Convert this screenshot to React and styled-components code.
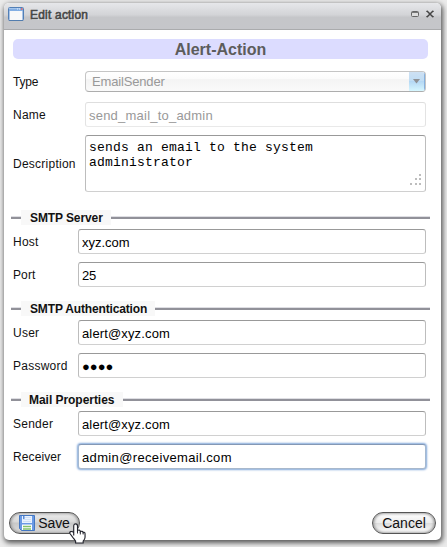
import React from 'react';
import styled, { createGlobalStyle, css } from 'styled-components';

const GlobalStyle = createGlobalStyle`
  * { box-sizing: border-box; }
  body { margin: 0; background: #e9e9e9; font-family: "Liberation Sans", Arial, sans-serif; }
`;

const Desktop = styled.main`
  width: 447px;
  height: 547px;
  padding: 3px 5px 7px 4px;
  overflow: hidden;
  background: #ebebeb;
`;

const Window = styled.section`
  position: relative;
  display: flex;
  flex-direction: column;
  width: 437px;
  height: 537px;
  border-radius: 5px;
  background: #fff;
  box-shadow: 1px 2px 5px 1px rgba(0, 0, 0, 0.62);
`;

const TitleBar = styled.header`
  display: flex;
  align-items: flex-start;
  height: 27px;
  padding: 4px 7px 0 4px;
  border-bottom: 1px solid #aaabad;
  border-radius: 5px 5px 0 0;
  background: linear-gradient(#e6e7ea 0, #d3d4d7 45%, #c5c6c9 55%, #c5c6ca 100%);
`;

const WindowTitle = styled.h1`
  flex: 1;
  margin: 0 0 0 6px;
  font-size: 12px;
  font-weight: 400;
  line-height: 17px;
  letter-spacing: 0.2px;
  color: #484848;
  -webkit-text-stroke: 0.6px #484848;
  text-shadow: 1px 1px 0 #eee;
`;

const WindowControls = styled.div`
  display: flex;
  gap: 7px;
  padding-top: 3px;
`;

const Content = styled.div`
  display: flex;
  flex-direction: column;
  flex: 1;
  padding: 9px 11px 0 7px;
`;

const Banner = styled.h2`
  width: 415px;
  height: 20px;
  margin: 0 0 12px 2px;
  border-radius: 5px;
  background: #dcdcff;
  color: #5c5c5c;
  font-size: 16px;
  font-weight: 700;
  line-height: 21px;
  text-align: center;
`;

const Row = styled.div`
  display: grid;
  grid-template-columns: ${({ $wide }) => ($wide ? '72px 341px' : '65px 348px')};
  align-items: center;
  height: ${({ $height = 25 }) => $height}px;
  margin: 0 0 ${({ $gap = 8 }) => $gap}px 2px;
`;

const Label = styled.label`
  font-size: 12px;
  line-height: 14px;
  letter-spacing: ${({ $spacing = 0.25 }) => $spacing}px;
  color: #111;
`;

const fieldFrame = css`
  width: 100%;
  height: 100%;
  margin: 0;
  outline: 0;
  border: 1px solid #bdbdbd;
  border-top-color: #999;
  border-bottom-color: #d0d0d0;
  border-radius: 3px;
  background: #fff;
  color: #000;
`;

const Input = styled.input`
  ${fieldFrame}
  padding: 2px 3px 0;
  font: 13px "Liberation Sans", Arial, sans-serif;
  letter-spacing: ${({ $spacing = 0 }) => $spacing}px;

  &:disabled {
    border-color: #dedede #e3e3e3 #e9e9e9;
    color: #999;
    -webkit-text-fill-color: #999;
  }

  ${({ $focused }) => $focused && css`
    border-color: #8498b5 #a4b8d0 #a8b8cc;
    box-shadow: 0 0 2px 1px #83a9da;
  `}
`;

const TextAreaFrame = styled.div`
  ${fieldFrame}
  display: flex;
  align-items: flex-end;
  justify-content: space-between;
  padding: 4px 3px 5px 3px;
`;

const TextArea = styled.textarea`
  align-self: stretch;
  width: 290px;
  padding: 0;
  border: 0;
  outline: 0;
  overflow: hidden;
  resize: none;
  color: #000;
  background: transparent;
  font: 13px/15px "Liberation Mono", "Courier New", monospace;
  letter-spacing: 0.2px;
`;

const Combo = styled.button`
  display: flex;
  width: 341px;
  height: 21px;
  padding: 0;
  overflow: hidden;
  border: 1px solid #c5c5c5;
  border-bottom-color: #adadad;
  border-radius: 4px;
  background: linear-gradient(#fff, #fbfbfb 35%, #f4f4f4 40%, #fafafa);
  color: #999;
  font: 13px/20px "Liberation Sans", Arial, sans-serif;
  text-align: left;
`;

const ComboText = styled.span`
  flex: 1;
  padding-left: 6px;
  letter-spacing: -0.16px;
`;

const ComboArrow = styled.span`
  display: flex;
  align-items: center;
  justify-content: center;
  width: 16px;
  height: 19px;
  border-right: 1px solid #87b2df;
  background: linear-gradient(#cee1f3 0, #c0ddf4 45%, #b5d8f4 50%, #d6f7ff 100%);
`;

const Legend = styled.h3`
  display: flex;
  align-items: center;
  width: 419px;
  height: 15px;
  margin: 0 0 4px;

  &::before, &::after {
    content: "";
    width: 10px;
    height: 2px;
    background: #919199;
    box-shadow: 0 -1px 0 #dedee3;
  }
  &::after { flex: 1; }
`;

const LegendText = styled.span`
  width: ${({ $width }) => $width}px;
  height: 15px;
  padding-left: ${({ $inset = 9 }) => $inset}px;
  background: #f8f8f8;
  color: #111;
  font-size: 12px;
  font-weight: 700;
  line-height: 16px;
  letter-spacing: ${({ $spacing = -0.1 }) => $spacing}px;
  white-space: nowrap;
`;

const Group = styled.section`
  display: flex;
  flex-direction: column;
`;

const Footer = styled.footer`
  display: flex;
  justify-content: space-between;
  padding: 0 5px 6px;
`;

const Button = styled.button`
  display: flex;
  align-items: center;
  justify-content: center;
  gap: 3px;
  width: ${({ $width }) => $width}px;
  height: 22px;
  padding: 0;
  border: 1px solid #555;
  border-radius: 11px;
  background: ${({ $active }) => ($active
    ? 'linear-gradient(#ececec, #d8d8d8 45%, #c8c8c8 50%, #dedede)'
    : 'linear-gradient(#fff, #ededed 48%, #dedede 52%, #fff)')};
  box-shadow: inset 1px 0 3px #999, inset -1px 0 3px #999;
  color: #111;
  font: 14px/22px "Liberation Sans", Arial, sans-serif;
  letter-spacing: ${({ $active }) => ($active ? -0.1 : 0)}px;
`;

const Pointer = styled.svg`
  position: absolute;
  left: 65px;
  top: 520px;
`;

const WindowIcon = () => (
  <svg width="16" height="15" viewBox="0 0 16 15" aria-hidden="true">
    <rect x=".5" y=".5" width="15" height="13" rx="1" fill="#fff" stroke="#527fb6" />
    <path d="M1 1h14v3H1z" fill="#83aee3" />
    <path d="M1 1.5h11" stroke="#a4c5ec" />
    <path d="M9 2h1M11 2h1" stroke="#dcebff" />
    <path d="M13 2h1.5" stroke="#ef6158" strokeWidth="1.5" />
    <path d="M2 4h12v9H2z" fill="#f8f8f9" />
    <path d="M1.5 4v9M14.5 4v9" stroke="#a9c4e6" />
    <path d="M1 13.5h14" stroke="#537dae" />
  </svg>
);

const DiskIcon = () => (
  <svg width="16" height="16" viewBox="0 0 16 16" aria-hidden="true">
    <path d="M.5.5h15v15h-13l-2-2z" fill="#6a9ae4" stroke="#4477c2" />
    <path d="M3 1h10v7H3z" fill="#e9f2ff" />
    <path d="M4 2.5h8M4 4.5h8M4 6.5h8" stroke="#d0e0f5" />
    <path d="M4 1h1.5v3H4z" fill="#5c8bd4" />
    <path d="M3 9.5h10V15H3z" fill="#fff" />
    <path d="M4 11.5h8M4 14h8" stroke="#83c26b" strokeWidth="1.6" />
  </svg>
);

const fieldProps = { readOnly: true, spellCheck: false };

function Field({ label, value, labelSpacing, ...rest }) {
  const id = label.toLowerCase();
  return (
    <>
      <Label htmlFor={id} $spacing={labelSpacing}>{label}</Label>
      <Input id={id} value={value} {...fieldProps} {...rest} />
    </>
  );
}

export default function App() {
  return (
    <>
      <GlobalStyle />
      <Desktop>
        <Window>
          <TitleBar>
            <WindowIcon />
            <WindowTitle>Edit action</WindowTitle>
            <WindowControls>
              <svg width="8" height="8" viewBox="0 0 8 8" aria-label="Maximize">
                <rect x=".5" y="1.5" width="7" height="5" rx="1" fill="#ddd" stroke="#666" />
                <path d="M1 2.5h6" stroke="#777" />
              </svg>
              <svg width="8" height="8" viewBox="0 0 8 8" aria-label="Close">
                <path d="M0 1.3h2M6 1.3h2M0 6.7h2M6 6.7h2" stroke="#666" />
                <path d="m1 1 6 6M7 1 1 7" stroke="#444" strokeWidth="1.5" />
              </svg>
            </WindowControls>
          </TitleBar>
          <Content>
            <Banner>Alert-Action</Banner>
            <Row $wide $height={21} $gap={10}>
              <Label $spacing={-0.2}>Type</Label>
              <Combo type="button" disabled>
                <ComboText>EmailSender</ComboText>
                <ComboArrow>
                  <svg width="7" height="5" viewBox="0 0 7 5"><path d="M0 0h7L3.5 4.5z" fill="#8f9296" /></svg>
                </ComboArrow>
              </Combo>
            </Row>
            <Row $wide>
              <Field label="Name" value="send_mail_to_admin" $spacing={0.22} disabled />
            </Row>
            <Row $wide $height={57} $gap={18}>
              <Label htmlFor="description">Description</Label>
              <TextAreaFrame>
                <TextArea id="description" value={'sends an email to the system\nadministrator'} {...fieldProps} />
                <svg width="12" height="12" viewBox="0 0 12 12" aria-hidden="true">
                  <path d="M9 0h2v2H9zM5 4h2v2H5zm4 0h2v2H9zM0 9h2v2H0zm5 0h2v2H5zm4 0h2v2H9z" fill="#bdbdbd" />
                </svg>
              </TextAreaFrame>
            </Row>
            <Group>
              <Legend><LegendText $width={90}>SMTP Server</LegendText></Legend>
              <Row><Field label="Host" value="xyz.com" /></Row>
              <Row $gap={14}><Field label="Port" value="25" labelSpacing={0.1} $spacing={-0.2} /></Row>
            </Group>
            <Group>
              <Legend><LegendText $width={134} $spacing={-0.15}>SMTP Authentication</LegendText></Legend>
              <Row><Field label="User" value="alert@xyz.com" $spacing={0.14} /></Row>
              <Row $gap={14}><Field label="Password" value="●●●●" /></Row>
            </Group>
            <Group>
              <Legend><LegendText $width={102} $inset={8} $spacing={-0.04}>Mail Properties</LegendText></Legend>
              <Row><Field label="Sender" value="alert@xyz.com" $spacing={0.14} /></Row>
              <Row><Field label="Receiver" value="admin@receivemail.com" labelSpacing={0.1} $spacing={0.35} $focused /></Row>
            </Group>
          </Content>
          <Footer>
            <Button type="button" $width={71} $active><DiskIcon />Save</Button>
            <Button type="button" $width={64}>Cancel</Button>
          </Footer>
          <Pointer width="17" height="21" viewBox="0 0 18 22" aria-hidden="true">
            <path d="M5 13V3c0-3 4-3 4 0v5c1-1 3-1 3 1 1-1 3 0 3 1 2-1 2 1 2 2v3c0 2-1 3-2 4v2H7v-2c-1-1-2-3-3-4l-3-4c-1-2 2-3 4-1Z" fill="#fff" stroke="#20212a" strokeWidth="1.2" />
            <path d="M9 8v3M12 9v3M15 10v2" stroke="#20212a" fill="none" />
          </Pointer>
        </Window>
      </Desktop>
    </>
  );
}
